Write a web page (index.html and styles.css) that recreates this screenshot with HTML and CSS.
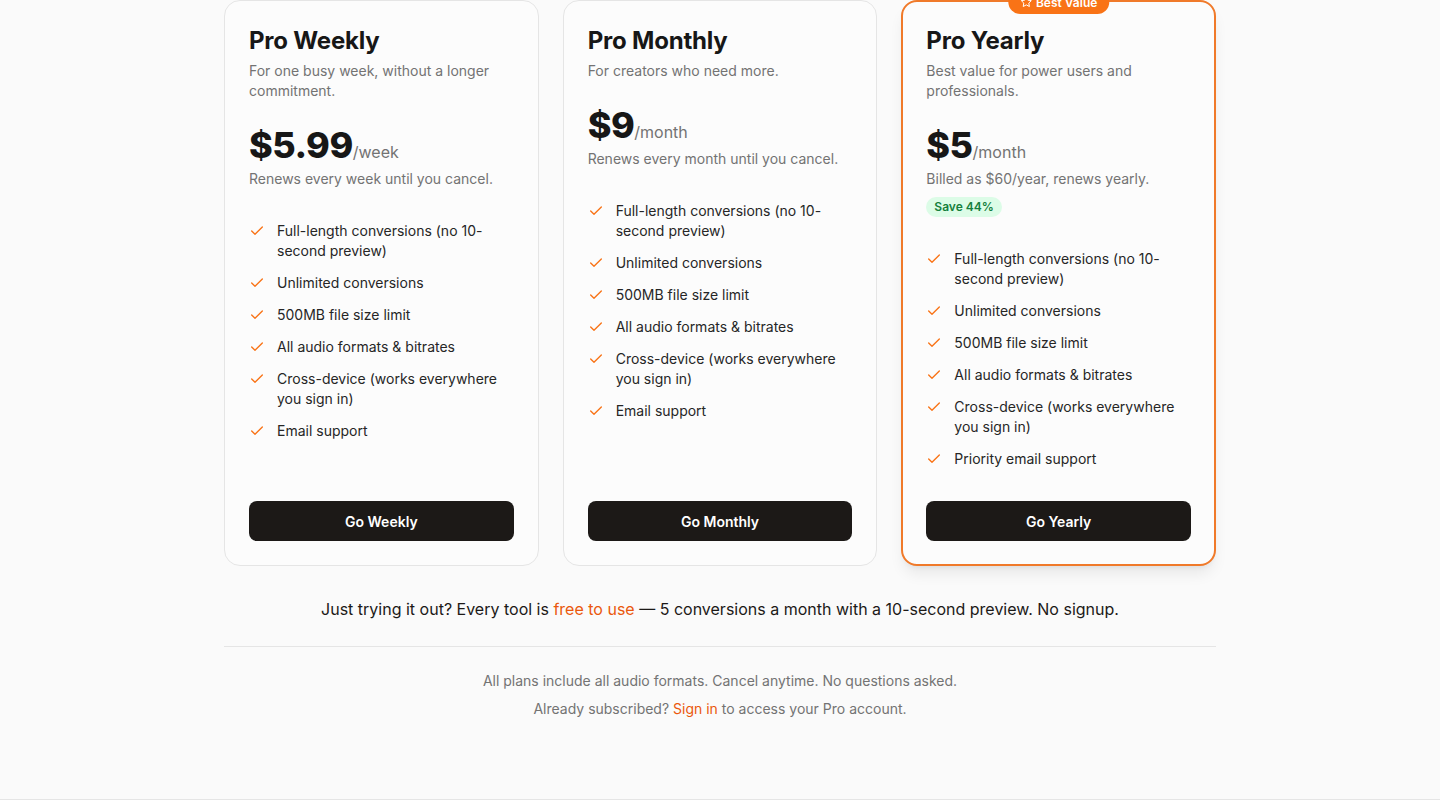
FILE: index.html
```html
<!DOCTYPE html>
<html lang="en">
<head>
<meta charset="utf-8">
<title>Pricing</title>
<link rel="stylesheet" href="styles.css">
</head>
<body>
<main class="page">
  <section class="plans">
    <div class="card">
      <h2 class="plan-name">Pro Weekly</h2>
      <p class="plan-desc">For one busy week, without a longer commitment.</p>
      <div class="price"><span class="amount">$5.99</span><span class="period">/week</span></div>
      <p class="renew">Renews every week until you cancel.</p>
      <ul class="features">
        <li><svg class="check" viewBox="0 0 24 24"><path d="M20 6 9 17l-5-5"/></svg><span>Full-length conversions (no 10-second preview)</span></li>
        <li><svg class="check" viewBox="0 0 24 24"><path d="M20 6 9 17l-5-5"/></svg><span>Unlimited conversions</span></li>
        <li><svg class="check" viewBox="0 0 24 24"><path d="M20 6 9 17l-5-5"/></svg><span>500MB file size limit</span></li>
        <li><svg class="check" viewBox="0 0 24 24"><path d="M20 6 9 17l-5-5"/></svg><span>All audio formats &amp; bitrates</span></li>
        <li><svg class="check" viewBox="0 0 24 24"><path d="M20 6 9 17l-5-5"/></svg><span>Cross-device (works everywhere you sign in)</span></li>
        <li><svg class="check" viewBox="0 0 24 24"><path d="M20 6 9 17l-5-5"/></svg><span>Email support</span></li>
      </ul>
      <button class="cta">Go Weekly</button>
    </div>
    <div class="card">
      <h2 class="plan-name">Pro Monthly</h2>
      <p class="plan-desc">For creators who need more.</p>
      <div class="price"><span class="amount">$9</span><span class="period">/month</span></div>
      <p class="renew">Renews every month until you cancel.</p>
      <ul class="features">
        <li><svg class="check" viewBox="0 0 24 24"><path d="M20 6 9 17l-5-5"/></svg><span>Full-length conversions (no 10-second preview)</span></li>
        <li><svg class="check" viewBox="0 0 24 24"><path d="M20 6 9 17l-5-5"/></svg><span>Unlimited conversions</span></li>
        <li><svg class="check" viewBox="0 0 24 24"><path d="M20 6 9 17l-5-5"/></svg><span>500MB file size limit</span></li>
        <li><svg class="check" viewBox="0 0 24 24"><path d="M20 6 9 17l-5-5"/></svg><span>All audio formats &amp; bitrates</span></li>
        <li><svg class="check" viewBox="0 0 24 24"><path d="M20 6 9 17l-5-5"/></svg><span>Cross-device (works everywhere you sign in)</span></li>
        <li><svg class="check" viewBox="0 0 24 24"><path d="M20 6 9 17l-5-5"/></svg><span>Email support</span></li>
      </ul>
      <button class="cta">Go Monthly</button>
    </div>
    <div class="card featured">
      <div class="badge"><svg class="star" viewBox="0 0 24 24"><polygon points="12 2 15.09 8.26 22 9.27 17 14.14 18.18 21.02 12 17.77 5.82 21.02 7 14.14 2 9.27 8.91 8.26 12 2"/></svg>Best Value</div>
      <h2 class="plan-name">Pro Yearly</h2>
      <p class="plan-desc">Best value for power users and professionals.</p>
      <div class="price"><span class="amount">$5</span><span class="period">/month</span></div>
      <p class="renew">Billed as $60/year, renews yearly.</p>
      <span class="save">Save 44%</span>
      <ul class="features">
        <li><svg class="check" viewBox="0 0 24 24"><path d="M20 6 9 17l-5-5"/></svg><span>Full-length conversions (no 10-second preview)</span></li>
        <li><svg class="check" viewBox="0 0 24 24"><path d="M20 6 9 17l-5-5"/></svg><span>Unlimited conversions</span></li>
        <li><svg class="check" viewBox="0 0 24 24"><path d="M20 6 9 17l-5-5"/></svg><span>500MB file size limit</span></li>
        <li><svg class="check" viewBox="0 0 24 24"><path d="M20 6 9 17l-5-5"/></svg><span>All audio formats &amp; bitrates</span></li>
        <li><svg class="check" viewBox="0 0 24 24"><path d="M20 6 9 17l-5-5"/></svg><span>Cross-device (works everywhere you sign in)</span></li>
        <li><svg class="check" viewBox="0 0 24 24"><path d="M20 6 9 17l-5-5"/></svg><span>Priority email support</span></li>
      </ul>
      <button class="cta">Go Yearly</button>
    </div>
  </section>
  <p class="free-note">Just trying it out? Every tool is <a href="#" class="link">free to use</a> — 5 conversions a month with a 10-second preview. No signup.</p>
  <div class="fine">
    <p>All plans include all audio formats. Cancel anytime. No questions asked.</p>
    <p>Already subscribed? <a href="#" class="link">Sign in</a> to access your Pro account.</p>
  </div>
</main>
<footer class="site-footer"></footer>
</body>
</html>
```

FILE: styles.css
```css
* { box-sizing: border-box; }
html, body { margin: 0; padding: 0; }
body {
  background: #fafafa;
  font-family: Inter, "Noto Sans", sans-serif;
  color: #171717;
  -webkit-font-smoothing: antialiased;
}
.page {
  width: 992px;
  margin: 0 auto;
  padding-bottom: 80px;
}
.plans {
  display: grid;
  grid-template-columns: repeat(3, 1fr);
  gap: 24px;
}
.card {
  position: relative;
  display: flex;
  flex-direction: column;
  border: 1px solid #e5e5e5;
  border-radius: 16px;
  background: #fcfcfc;
  padding: 24px;
}
.card.featured {
  border: 2px solid #f07a2a;
  padding: 23px;
  box-shadow: 0 10px 15px -3px rgba(0,0,0,0.08), 0 4px 6px -4px rgba(0,0,0,0.08);
}
.badge {
  position: absolute;
  top: -12px;
  left: 50%;
  transform: translateX(-50%);
  display: flex;
  align-items: center;
  gap: 4px;
  height: 24px;
  padding: 0 12px;
  border-radius: 999px;
  background: #f97316;
  color: #fff;
  font-size: 12px;
  font-weight: 600;
  white-space: nowrap;
}
.star {
  width: 12px;
  height: 12px;
  fill: none;
  stroke: #fff;
  stroke-width: 2;
  stroke-linejoin: round;
}
.plan-name {
  margin: 0;
  font-size: 24px;
  line-height: 32px;
  font-weight: 700;
  letter-spacing: -0.2px;
  color: #171717;
}
.plan-desc {
  margin: 4px 0 0;
  font-size: 14px;
  line-height: 20px;
  color: #737373;
}
.price {
  margin-top: 24px;
  height: 40px;
  display: flex;
  align-items: baseline;
}
.amount {
  font-size: 36px;
  line-height: 40px;
  font-weight: 800;
  letter-spacing: -0.5px;
  color: #171717;
}
.period {
  font-size: 16px;
  line-height: 16px;
  color: #737373;
}
.renew {
  margin: 4px 0 0;
  font-size: 14px;
  line-height: 20px;
  color: #737373;
}
.save {
  align-self: flex-start;
  margin-top: 8px;
  padding: 0 8px;
  height: 20px;
  line-height: 20px;
  border-radius: 999px;
  background: #dcfce7;
  color: #15803d;
  font-size: 12px;
  font-weight: 600;
}
.features {
  list-style: none;
  margin: 32px 0 0;
  padding: 0;
  flex: 1;
  display: flex;
  flex-direction: column;
  gap: 12px;
}
.features li {
  display: flex;
  align-items: flex-start;
  gap: 12px;
  font-size: 14px;
  line-height: 20px;
  color: #262626;
}
.check {
  flex: none;
  width: 16px;
  height: 16px;
  margin-top: 2px;
  fill: none;
  stroke: #f97316;
  stroke-width: 2;
  stroke-linecap: round;
  stroke-linejoin: round;
}
.cta {
  margin-top: 32px;
  height: 40px;
  width: 100%;
  border: 0;
  border-radius: 8px;
  background: #1c1917;
  color: #fff;
  font-family: inherit;
  font-size: 14px;
  font-weight: 600;
  cursor: pointer;
}
.free-note {
  margin: 31px 0 0;
  padding-bottom: 25px;
  border-bottom: 1px solid #e5e5e5;
  text-align: center;
  font-size: 16px;
  line-height: 24px;
  color: #1c1917;
}
.link {
  color: #ea580c;
  text-decoration: none;
}
.fine {
  margin-top: 24px;
  display: flex;
  flex-direction: column;
  gap: 8px;
  text-align: center;
}
.fine p {
  margin: 0;
  font-size: 14px;
  line-height: 20px;
  color: #737373;
}
.site-footer {
  border-top: 1px solid #e5e5e5;
  height: 40px;
}
```
